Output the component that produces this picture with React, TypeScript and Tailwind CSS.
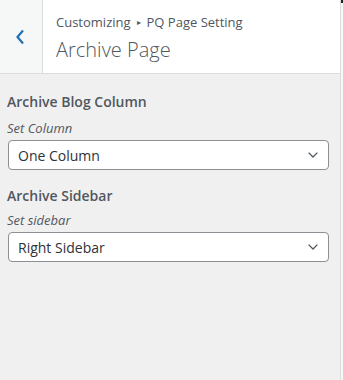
const font = { fontFamily: '"Open Sans", "Noto Sans", sans-serif' };

function SelectBox({ value }: { value: string }) {
    return (
        <div className="mt-[2px] mx-[1px] h-[30px] w-[321px] flex items-center justify-between bg-white border border-[#8c8f94] rounded-[4px] pl-[9px] pr-[7px]">
            <span className="text-[14px] text-[#2c3338]">{value}</span>
            <svg width="16" height="16" viewBox="0 0 20 20" className="text-[#50575e]">
                <path d="M4.5 7l5.5 5.5 5.5-5.5" fill="none" stroke="currentColor" strokeWidth="1.6" />
            </svg>
        </div>
    );
}

export default function App() {
    return (
        <div className="w-[343px] h-[380px] flex bg-[#f0f0f1]" style={font}>
            <div className="w-[341px] h-full border-r border-[#dcdcde] flex flex-col">
                {/* Header */}
                <div className="h-[74px] flex bg-white border-b border-[#dcdcde]">
                    <div className="w-[43px] h-full bg-[#f6f7f7] border-r border-[#dcdcde] flex items-center justify-center">
                        <svg width="12" height="18" viewBox="0 0 12 18" className="text-[#2271b1] -ml-[2px]">
                            <path d="M9 2.5L3.5 9l5.5 6.5" fill="none" stroke="currentColor" strokeWidth="2.2" />
                        </svg>
                    </div>
                    <div className="flex flex-col pl-[13px] pt-[12px]">
                        <div className="text-[13px] leading-[20px] text-[#50575e] flex items-center">
                            Customizing
                            <span className="text-[8px] mx-[6px]">▸</span>
                            PQ Page Setting
                        </div>
                        <div className="text-[20px] leading-[28px] font-light text-[#50575e] mt-[4px]">Archive Page</div>
                    </div>
                </div>

                {/* Controls */}
                <div className="px-[7px] pt-[18px]">
                    <div className="text-[14px] leading-[20px] font-semibold text-[#50575e]">Archive Blog Column</div>
                    <div className="text-[13px] leading-[20px] italic text-[#50575e] mt-[6px]">Set Column</div>
                    <SelectBox value="One Column" />

                    <div className="text-[14px] leading-[20px] font-semibold text-[#50575e] mt-[16px]">Archive Sidebar</div>
                    <div className="text-[13px] leading-[20px] italic text-[#50575e] mt-[4px]">Set sidebar</div>
                    <SelectBox value="Right Sidebar" />
                </div>
            </div>
            <div className="w-[2px] h-full bg-[#f6f7f7] flex flex-col">
                <div className="h-[3px] bg-[#1d2327]" />
            </div>
        </div>
    );
}
